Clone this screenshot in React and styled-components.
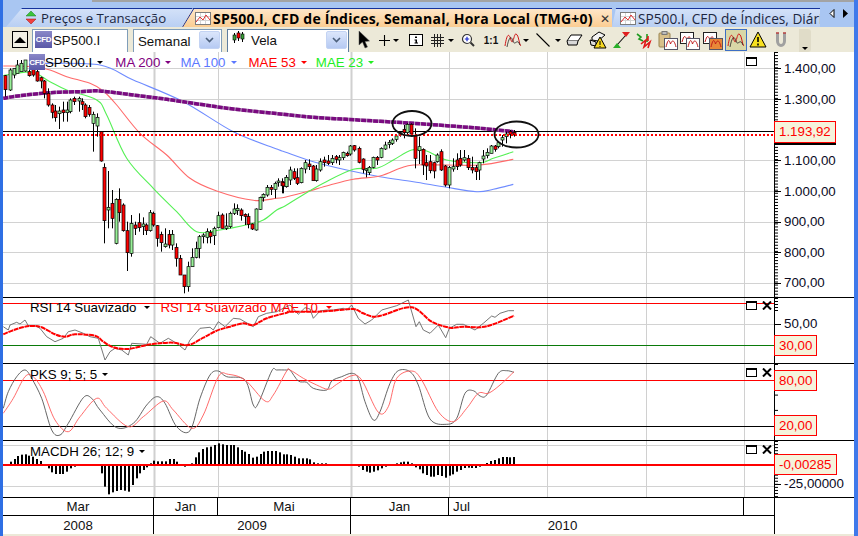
import React from "react";
import styled, { createGlobalStyle } from "styled-components";

const GlobalStyle = createGlobalStyle`
  * { box-sizing: border-box; }
  html, body { margin: 0; background: #fff; overflow: hidden; }
  body { font-family: "Liberation Sans", Arial, sans-serif; color: #000; }
`;

const VERTICALS = [
  { x: 154, w: 2 }, { x: 218, w: 1 }, { x: 351, w: 2 }, { x: 449, w: 1 },
  { x: 547, w: 1 }, { x: 646, w: 1 }, { x: 744, w: 1 },
];

// candles read off the picture: x, wick top, wick bottom, body top, body bottom, colour
const toA = (r) => ({ x: r[0] / 3, wt: 55 + r[1] / 3, wb: 55 + r[2] / 3, bt: 55 + r[3] / 3, bb: 55 + r[4] / 3, c: r[5] });
const toB = (r) => ({ x: 280 + r[0] / 3, wt: 90 + r[1] / 3, wb: 90 + r[2] / 3, bt: 90 + r[3] / 3, bb: 90 + r[4] / 3, c: r[5] });

const CANDLES = [
  ...[
    [15,60,125,62,104,"r"],[30,40,108,45,105,"g"],[41,40,70,40,60,"g"],[52,15,55,30,55,"g"],[64,15,50,25,50,"g"],
    [76,15,50,15,48,"g"],[88,35,65,50,62,"r"],[100,30,65,35,60,"r"],[110,45,80,50,78,"r"],[122,65,100,68,78,"r"],
    [133,75,130,78,115,"r"],[145,100,155,115,150,"r"],[155,145,190,150,172,"r"],[166,150,200,168,188,"r"],
    [178,155,222,168,176,"g"],[190,140,200,165,173,"r"],[200,140,200,165,173,"g"],[211,130,175,135,170,"g"],
    [222,125,150,130,140,"r"],[236,125,170,130,138,"g"],[246,130,165,140,148,"r"],[256,145,190,150,185,"r"],
    [268,150,185,157,178,"r"],[280,170,290,178,205,"g"],[291,175,245,187,213,"g"],[303,228,320,230,318,"r"],
    [313,325,565,337,497,"r"],[325,348,520,457,465,"g"],[337,405,520,445,490,"r"],[348,430,568,433,565,"g"],
    [358,400,500,433,473,"r"],[370,445,530,450,527,"r"],[382,500,648,527,593,"r"],[394,480,605,505,595,"g"],
    [406,500,540,510,520,"r"],[416,475,530,503,518,"r"],[428,487,540,507,515,"g"],[439,505,540,510,527,"r"],
    [451,465,530,473,527,"g"],[460,470,515,475,510,"r"],[472,510,575,512,550,"r"],[484,530,590,538,563,"r"],
    [496,520,578,567,575,"g"],[508,525,580,538,570,"r"],[517,525,585,538,570,"g"],[528,565,635,577,610,"r"],
    [541,600,660,610,660,"r"],[553,660,715,660,695,"r"],[565,620,710,635,695,"g"],[575,580,635,607,635,"g"],
    [587,560,610,580,607,"g"],[598,540,610,545,580,"g"],[609,535,565,540,545,"g"],[620,520,565,530,547,"g"],
    [631,525,565,532,545,"r"],[643,515,570,520,542,"g"],[655,470,520,482,518,"g"],[667,475,520,480,520,"r"],
    [677,475,525,513,520,"g"],[689,470,520,475,515,"g"],[701,445,480,462,475,"g"],[712,448,480,460,467,"g"],
    [722,460,497,465,482,"r"],[734,475,510,478,484,"r"],[745,475,520,484,508,"r"],[757,505,525,507,522,"r"],
    [769,460,527,462,525,"g"],[780,425,465,427,463,"g"],[790,415,440,418,428,"g"],[802,390,425,397,420,"g"],
    [814,390,420,397,403,"r"],[826,380,430,385,403,"g"],[835,370,395,378,382,"g"],[847,370,415,380,392,"r"],
    [859,360,398,367,395,"g"],
  ].map(toA),
  ...[
    [8,275,310,278,288,"r"],[19,260,290,262,290,"g"],[31,230,285,240,270,"g"],[41,235,270,245,265,"r"],
    [52,235,285,263,280,"r"],[64,232,280,235,278,"g"],[76,210,250,218,237,"g"],[88,208,240,222,230,"r"],
    [98,225,272,228,272,"r"],[109,225,275,237,272,"g"],[121,205,245,215,240,"g"],[133,200,230,210,218,"r"],
    [145,195,225,213,220,"r"],[155,195,225,205,218,"g"],[167,195,220,200,208,"r"],[178,195,225,203,210,"g"],
    [190,185,210,187,203,"g"],[200,185,200,190,197,"r"],[211,165,197,168,192,"g"],[223,165,185,167,180,"r"],
    [236,170,220,175,217,"r"],[248,205,250,207,238,"r"],[257,235,262,237,240,"g"],[268,228,255,232,248,"g"],
    [280,200,235,202,232,"g"],[292,198,225,202,210,"r"],[302,172,205,175,202,"g"],[314,155,180,165,177,"g"],
    [326,150,175,157,163,"g"],[337,145,165,150,160,"g"],[349,135,155,138,148,"g"],[360,125,140,128,135,"g"],
    [371,105,145,118,128,"r"],[382,100,135,103,128,"g"],[394,100,140,103,132,"r"],[406,115,235,138,205,"r"],
    [417,140,222,170,182,"g"],[428,175,255,178,225,"r"],[439,195,270,218,228,"r"],[451,195,250,215,242,"r"],
    [461,215,265,218,243,"r"],[472,190,218,195,215,"g"],[484,178,243,185,240,"r"],[496,225,290,228,285,"r"],
    [508,228,295,232,285,"g"],[519,205,245,230,237,"g"],[530,190,240,210,230,"r"],[541,180,230,205,225,"r"],
    [553,180,215,203,210,"g"],[564,195,240,205,233,"r"],[575,200,250,232,240,"r"],[587,225,270,233,245,"r"],
    [598,215,270,218,240,"g"],[610,180,220,198,207,"g"],[620,175,205,187,197,"g"],[632,165,190,168,190,"g"],
    [644,165,185,168,178,"r"],[655,155,175,158,170,"g"],[667,135,170,143,150,"g"],[678,125,160,132,140,"g"],
    [689,120,145,125,133,"r"],[701,120,140,127,135,"r"],
  ].map(toB),
];

// helpers turning crops back into page coordinates
const pts = (...parts) => parts.flatMap(([ox, oy, list]) => list.map(([x, y]) => [ox + x / 3, oy + y / 3]));
const poly = (points) => points.map(([x, y]) => `${x.toFixed(1)},${y.toFixed(1)}`).join(" ");

// catmull-rom through the points, these lines are moving averages and curve softly
const smooth = (p) => {
  let d = `M${p[0][0].toFixed(1)} ${p[0][1].toFixed(1)}`;
  for (let i = 0; i < p.length - 1; i++) {
    const a = p[i - 1] || p[i];
    const b = p[i];
    const c = p[i + 1];
    const e = p[i + 2] || c;
    const c1 = [b[0] + (c[0] - a[0]) / 6, b[1] + (c[1] - a[1]) / 6];
    const c2 = [c[0] - (e[0] - b[0]) / 6, c[1] - (e[1] - b[1]) / 6];
    d += `C${c1[0].toFixed(1)} ${c1[1].toFixed(1)} ${c2[0].toFixed(1)} ${c2[1].toFixed(1)} ${c[0].toFixed(1)} ${c[1].toFixed(1)}`;
  }
  return d;
};

const MA200 = smooth(pts([0, 55, [[10,130],[60,122],[150,113],[240,110],[300,108],[400,120],[500,133],[600,148],[700,162],[870,180]]],
  [280, 90, [[100,82],[200,88],[300,94],[400,100],[500,107],[600,115],[700,125]]]));
const MA100 = smooth(pts([0, 55, [[130,25],[300,30],[400,75],[550,140],[700,230],[830,282]]],
  [280, 90, [[15,186],[100,215],[200,240],[300,260],[400,275],[500,292],[590,305],[640,298],[700,283]]]));
const MAE53 = smooth(pts([0, 55, [[10,33],[100,35],[150,45],[200,65],[270,85],[310,108],[350,150],[420,235],[500,300],[570,370],[650,408],[760,436],[830,430]]],
  [280, 90, [[15,322],[80,305],[150,285],[220,268],[300,258],[360,235],[400,225],[500,225],[600,225],[700,208]]]));
const MAE23 = smooth(pts([0, 55, [[10,62],[50,55],[100,52],[150,80],[200,105],[290,135],[320,180],[380,310],[460,400],[530,470],[590,530],[660,525],[750,507],[790,495],[830,465]]],
  [280, 90, [[15,348],[60,320],[130,280],[220,238],[290,235],[340,210],[395,180],[440,183],[500,210],[600,218],[640,205],[700,185]]]));

const RSI_GRAY = poly(pts([0, 295, [[10,95],[25,105],[30,90],[50,82],[60,87],[75,75],[85,92],[105,92],[120,100],[140,125],[165,140],[190,130],[205,110],[225,105],[250,115],[270,125],[295,130],[315,195],[330,170],[345,160],[365,165],[385,180],[395,145],[440,148],[452,125],[480,145],[505,130],[530,145],[555,165],[570,135],[600,100],[630,97],[640,105],[655,80],[675,95],[700,70],[720,72],[760,95],[775,65],[800,55],[830,50],[850,40]]],
  [290, 295, [[0,30],[25,58],[45,38],[60,42],[70,70],[90,48],[110,45],[130,45],[160,40],[170,45],[185,30],[205,70],[225,87],[245,75],[275,45],[320,32],[335,25],[355,15],[378,95],[388,80],[400,105],[420,115],[445,90],[467,128],[478,100],[500,88],[520,88],[555,105],[580,85],[605,63],[615,67],[630,55],[655,47],[672,47]]]));
const RSI_RED = smooth(pts([0, 295, [[10,118],[50,102],[90,93],[125,97],[165,118],[195,125],[225,118],[285,122],[310,140],[340,157],[385,162],[440,150],[480,145],[520,143],[565,150],[610,128],[650,107],[690,95],[730,85],[760,90],[800,70],[860,53]]],
  [290, 295, [[0,50],[80,50],[130,47],[190,42],[220,55],[250,65],[280,60],[365,37],[425,80],[480,98],[520,95],[570,97],[610,88],[672,62]]]));
const PKS_GRAY = smooth(pts([0, 295, [[10,340],[25,290],[50,245],[75,225],[95,250],[125,310],[155,405],[180,420],[205,385],[250,308],[275,310],[300,345],[350,398],[400,385],[440,330],[470,305],[495,325],[530,395],[570,407],[600,310],[630,240],[655,228],[680,245],[735,255],[760,330],[775,325],[815,228],[830,225],[860,225]]],
  [290, 295, [[0,225],[25,258],[50,262],[70,280],[110,285],[125,258],[155,245],[185,235],[205,250],[225,320],[250,375],[270,350],[300,265],[325,227],[360,230],[385,270],[420,372],[470,388],[500,370],[525,295],[550,287],[570,303],[590,300],[625,235],[650,227],[672,232]]]));
const PKS_RED = smooth(pts([0, 295, [[10,355],[40,310],[75,245],[100,245],[130,290],[165,375],[205,410],[240,365],[290,310],[320,340],[385,395],[430,365],[490,318],[520,345],[575,400],[610,360],[655,245],[685,238],[735,255],[795,318],[820,300],[860,228]]],
  [290, 295, [[0,225],[40,250],[80,270],[115,283],[140,268],[185,242],[215,255],[265,352],[295,335],[320,250],[365,228],[395,255],[445,350],[490,380],[530,340],[565,295],[595,295],[630,270],[672,230]]]));

const HIST = [
  ...[[33,80],[44,72],[55,63],[66,59],[77,58],[88,62],[99,65],[110,72],[122,78],[146,100],[157,112],[168,117],[179,117],[190,117],[200,110],[212,100],[224,95],[293,93],[305,115],[316,155],[328,178],[340,172],[352,168],[363,165],[375,167],[386,170],[398,150],[410,130],[420,115],[432,105],[442,97],[452,85],[463,77],[475,79],[487,79],[498,79],[510,72],[521,72],[532,80],[555,95],[575,85],[587,67],[598,52],[610,42],[621,37],[632,35],[645,30],[656,25],[668,28],[680,30],[692,30],[703,30],[714,37],[725,45],[736,50],[747,57],[759,68],[770,65],[782,57],[793,50],[805,48],[816,48],[828,48],[839,52],[851,58],[862,58],[874,60],[885,65],[897,70],[908,70],[920,70],[931,73],[942,82],[954,85],[965,85],[977,85],[1077,95],[1088,105],[1100,110],[1111,113],[1123,110],[1134,106],[1146,100],[1157,95],[1190,85],[1202,82],[1213,80],[1225,80],[1236,85],[1248,97],[1259,103]]
    .map(([x, y]) => ({ x: x / 3, y: 435 + y / 3 })),
  ...[[8,100],[20,105],[32,110],[42,110],[54,105],[66,108],[78,113],[90,107],[100,103],[112,95],[123,90],[134,84],[146,83],[157,84],[168,84],[180,80],[201,69],[213,63],[225,60],[237,55],[248,51],[260,51],[271,52],[283,51]]
    .map(([x, y]) => ({ x: 420 + x / 3, y: 440 + y / 3 })),
];

const Window = styled.div`
  width: 858px;
  height: 536px;
  display: flex;
  flex-direction: column;
  background: #fff;
  border-left: 3px solid #2f6fe4;
  border-right: 4px solid #3f79ea;
  overflow: hidden;
`;

const TabBar = styled.div`
  position: relative;
  height: 27px;
  flex: none;
  display: flex;
  padding: 8px 0 0 3px;
  background: #a9c6f2;
  &::before {
    content: "";
    position: absolute;
    top: 0;
    left: 89px;
    right: 0;
    height: 2px;
    background: #a3a3a3;
  }
`;

const Tab = styled.div`
  position: relative;
  flex: none;
  height: 19px;
  width: ${(p) => p.$w}px;
  margin-left: ${(p) => p.$ml || 0}px;
  z-index: ${(p) => (p.$active ? 2 : 1)};
  display: flex;
  align-items: center;
  gap: ${(p) => (p.$gap ? p.$gap : 2)}px;
  padding-left: ${(p) => p.$pl}px;
  border-top: 1px solid #16329c;
  background: ${(p) => (p.$active ? "linear-gradient(#ffe6c8, #fbcd92)" : "linear-gradient(#d3e1f8, #b9cff3)")};
  clip-path: polygon(${(p) => p.$slant}px 0, 100% 0, 100% 100%, 0 100%);
  font-family: "Open Sans", Tahoma, sans-serif;
  font-size: ${(p) => p.$size}px;
  letter-spacing: ${(p) => (p.$active ? "0.23px" : "0")};
  font-weight: ${(p) => (p.$active ? 700 : 400)};
  color: ${(p) => (p.$active ? "#000" : "#1c2740")};
  white-space: nowrap;
  overflow: hidden;
  svg { flex: none; }
`;

const TabEdge = styled.svg`
  position: absolute;
  left: 0;
  top: -1px;
`;

const TabClose = styled.span`
  margin-left: 5px;
  font-size: 12px;
  font-weight: 400;
  color: #333;
`;

const TabArrows = styled.div`
  position: absolute;
  top: 9px;
  right: 6px;
  display: flex;
  gap: 7px;
`;

const Toolbar = styled.div`
  height: 25px;
  flex: none;
  display: flex;
  align-items: flex-start;
  padding: 2px 0 0 9px;
  background: #ece9d8;
  overflow: hidden;
`;

const CollapseBtn = styled.div`
  width: 16px;
  height: 17px;
  margin: 2px 4px 0 0;
  display: flex;
  align-items: center;
  justify-content: center;
  background: #f2f0e4;
  border: 1px solid #000;
`;

const Combo = styled.div`
  width: ${(p) => p.$w}px;
  height: 27px;
  margin-right: 5px;
  display: flex;
  align-items: flex-start;
  gap: 1px;
  padding: 1px 1px 0 ${(p) => p.$pl || 2}px;
  background: #fff;
  border: 1px solid ${(p) => p.$border || "#7f9db9"};
  font-size: 13.3px;
  color: #111;
`;

const ComboLabel = styled.span`
  flex: 1;
  padding-top: ${(p) => p.$pt || 2}px;
  margin-left: ${(p) => p.$ml || 0}px;
`;

const ComboArrow = styled.span`
  width: 21px;
  height: 18px;
  display: flex;
  align-items: center;
  justify-content: center;
  border: 1px solid #c3d3f3;
  border-radius: 2px;
  background: linear-gradient(#dbe6fb, #b6caf3);
`;

const Tool = styled.div`
  flex: none;
  width: ${(p) => p.$w}px;
  height: 22px;
  margin-left: ${(p) => p.$ml || 0}px;
  display: flex;
  align-items: center;
  justify-content: center;
  font-size: 10px;
  font-weight: 700;
  color: #111;
  ${(p) => p.$selected && "background: #d9d7a6; border: 1px solid #3e6fc4;"}
`;

const Grip = styled.div`
  flex: none;
  width: 12px;
  height: 23px;
  margin-left: 8px;
  display: flex;
  align-items: flex-end;
  justify-content: center;
  padding-bottom: 2px;
  background: #e0dcc8;
  border-radius: 0 3px 3px 0;
`;

const Pane = styled.div`
  position: relative;
  flex: none;
  height: ${(p) => p.$h}px;
  display: flex;
  border-bottom: 1px solid #000;
  background: #fff;
`;

const Plot = styled.svg`
  flex: none;
  display: block;
  width: 771px;
  height: 100%;
`;

const Axis = styled.div`
  position: relative;
  flex: 1;
  border-left: 1px solid #000;
  font-size: 13.3px;
`;

const AxisTicks = styled.svg`
  position: absolute;
  left: 0;
  top: 0;
  width: 8px;
  height: 100%;
`;

const AxisLabel = styled.span`
  position: absolute;
  left: 9px;
  top: ${(p) => p.$y}px;
  color: #0a0a1e;
  line-height: 16px;
`;

const PriceTag = styled.span`
  position: absolute;
  left: -1px;
  top: ${(p) => p.$y}px;
  width: ${(p) => p.$w}px;
  height: ${(p) => p.$h || 21}px;
  display: flex;
  align-items: center;
  padding: 0 0 1px 4px;
  background: #f5f3dc;
  border: 1px solid #f00;
  color: #f00;
  z-index: 2;
  ${(p) => p.$shadow && "box-shadow: 0 2px 0 #000;"}
`;

const Legend = styled.div`
  position: absolute;
  left: ${(p) => p.$left}px;
  top: ${(p) => p.$top}px;
  display: flex;
  align-items: center;
  font-size: 13.3px;
  line-height: 15px;
  white-space: nowrap;
`;

const LegendItem = styled.span`
  display: inline-flex;
  align-items: center;
  gap: ${(p) => p.$gap || 5}px;
  color: ${(p) => p.$color || "#000"};
  margin-right: ${(p) => p.$mr || 0}px;
`;

const CfdBadge = styled.span`
  flex: none;
  width: ${(p) => p.$s || 16}px;
  height: ${(p) => p.$s || 16}px;
  display: inline-flex;
  align-items: center;
  justify-content: center;
  background: linear-gradient(#8a88c8, #5a58a8);
  color: #fff;
  font-size: 8px;
  font-weight: 700;
  letter-spacing: -0.3px;
`;

const Caret = styled.span`
  display: inline-block;
  width: 0;
  height: 0;
  border-left: 3.5px solid transparent;
  border-right: 3.5px solid transparent;
  border-top: 3.5px solid ${(p) => p.$color || "#000"};
`;

const PaneControls = styled.div`
  position: absolute;
  left: 743px;
  top: ${(p) => p.$top}px;
  display: flex;
  align-items: center;
  gap: 5px;
  z-index: 2;
`;

const MaxBox = styled.span`
  width: 11px;
  height: 9px;
  background: #fff;
  border: 1px solid #000;
  border-top-width: 2px;
`;

const TimeAxis = styled.div`
  flex: none;
  height: 36px;
  display: flex;
`;

const TimeRows = styled.div`
  flex: none;
  width: 771px;
  display: flex;
  flex-direction: column;
`;

const TimeRow = styled.div`
  height: 18px;
  display: flex;
  border-bottom: ${(p) => (p.$line ? "1px solid #000" : "none")};
  font-size: 13.3px;
`;

const TimeCell = styled.div`
  flex: none;
  width: ${(p) => p.$w}px;
  display: flex;
  align-items: center;
  justify-content: ${(p) => (p.$start ? "flex-start" : "center")};
  padding-left: ${(p) => p.$pl || 0}px;
  border-right: ${(p) => (p.$end ? "none" : "1px solid #000")};
  color: #111;
`;

const StatusEdge = styled.div`
  flex: 1;
  background: #ece9d8;
`;

const Grid = ({ lines = [] }) => (
  <g>
    {lines.map((y) => (
      <line key={y} x1="3" x2="774" y1={y + 0.5} y2={y + 0.5} stroke="#d2d2d2" />
    ))}
    {VERTICALS.map((v) => (
      <line key={v.x} x1={v.x + 0.5} x2={v.x + 0.5} y1="0" y2="540" stroke="#d0d0d0" strokeWidth={v.w} />
    ))}
  </g>
);

const Ticks = ({ h, step, major = [] }) => (
  <AxisTicks>
    {Array.from({ length: Math.floor(h / step) + 1 }, (_, i) => (
      <line key={i} x1="0" x2="3" y1={i * step + 0.5} y2={i * step + 0.5} stroke="#000" />
    ))}
    {major.map((y) => (
      <line key={y} x1="0" x2="6" y1={y + 0.5} y2={y + 0.5} stroke="#000" />
    ))}
  </AxisTicks>
);

const Candle = ({ x, wt, wb, bt, bb, c }) => {
  const cx = Math.round(x) + 0.5;
  return (
    <g>
      <line x1={cx} x2={cx} y1={wt} y2={wb} stroke="#000" />
      <rect x={cx - 1.5} y={bt} width="3" height={Math.max(bb - bt, 1.5)} fill={c === "r" ? "#f00" : "#98f098"} stroke="#000" strokeWidth="0.7" />
    </g>
  );
};

const MainPlot = () => (
  <Plot viewBox="3 52 771 245" preserveAspectRatio="none">
    <Grid lines={[68, 99, 160, 191, 222, 252, 283]} />
    <path d={MA100} fill="none" stroke="#6f8cff" strokeWidth="1.1" />
    <path d={MAE53} fill="none" stroke="#ff6a6a" strokeWidth="1.1" />
    <path d={MAE23} fill="none" stroke="#55f055" strokeWidth="1.1" />
    <line x1="3" x2="774" y1="131.5" y2="131.5" stroke="#000" />
    <path d={MA200} fill="none" stroke="#b9a4bf" strokeWidth="3.5" />
    <path d={MA200} fill="none" stroke="#7a0a80" strokeWidth="3.5" strokeDasharray="5 1" />
    {CANDLES.map((k) => (
      <Candle key={k.x} {...k} />
    ))}
    <line x1="3" x2="774" y1="135" y2="135" stroke="#f00" strokeWidth="2" strokeDasharray="2 2" />
    <ellipse cx="412" cy="123.5" rx="19.5" ry="12.5" fill="none" stroke="#111" strokeWidth="1.8" />
    <ellipse cx="516.5" cy="134.5" rx="22" ry="13" fill="none" stroke="#111" strokeWidth="1.8" />
  </Plot>
);

const RsiPlot = () => (
  <Plot viewBox="3 298 771 65" preserveAspectRatio="none">
    <Grid lines={[324]} />
    <line x1="3" x2="774" y1="303.5" y2="303.5" stroke="#f00" />
    <line x1="3" x2="774" y1="345.5" y2="345.5" stroke="#0a7a0a" />
    <polyline points={RSI_GRAY} fill="none" stroke="#666" strokeWidth="0.9" />
    <path d={RSI_RED} fill="none" stroke="#f00" strokeWidth="2" strokeDasharray="5 0.6" />
  </Plot>
);

const PksPlot = () => (
  <Plot viewBox="3 364 771 76" preserveAspectRatio="none">
    <Grid />
    <line x1="3" x2="774" y1="380.5" y2="380.5" stroke="#f00" />
    <line x1="3" x2="774" y1="426.5" y2="426.5" stroke="#000" />
    <path d={PKS_GRAY} fill="none" stroke="#555" strokeWidth="0.9" />
    <path d={PKS_RED} fill="none" stroke="#ff5a5a" strokeWidth="0.9" />
  </Plot>
);

const MacdPlot = () => (
  <Plot viewBox="3 441 771 56" preserveAspectRatio="none">
    <Grid lines={[445, 486]} />
    {HIST.map((b) => (
      <rect key={b.x} x={Math.round(b.x) - 1} y={Math.min(b.y, 465)} width="2" height={Math.abs(b.y - 465)} fill="#000" />
    ))}
    <line x1="3" x2="774" y1="465" y2="465" stroke="#f00" strokeWidth="2" />
  </Plot>
);

const Close = () => (
  <svg width="10" height="9" viewBox="0 0 10 9">
    <path d="M1 0.5 L9 8.5 M9 0.5 L1 8.5" stroke="#000" strokeWidth="2" fill="none" />
  </svg>
);

const UpDown = () => (
  <svg width="16" height="14" viewBox="0 0 16 14">
    <path d="M8 0 L13 5 H3 Z" fill="#3cc43c" stroke="#1c7c1c" strokeWidth="0.5" />
    <path d="M8 13 L13 8 H3 Z" fill="#f04040" stroke="#a01010" strokeWidth="0.5" />
  </svg>
);

const ChartTabIcon = () => (
  <svg width="16" height="13" viewBox="0 0 16 13">
    <rect x="0.5" y="0.5" width="15" height="12" fill="#fff" stroke="#7c7c7c" />
    <path d="M1 4.5H15M1 8.5H15M5.5 1V12M10.5 1V12" stroke="#d4d4d4" />
    <path d="M1 10 L5 5 L8 8 L11 3 L15 8" stroke="#e03030" fill="none" />
  </svg>
);

const SmallCandles = () => (
  <svg width="13" height="13" viewBox="0 0 13 13">
    <path d="M2.5 2V12M6.5 0V10M10.5 1V11" stroke="#000" />
    <rect x="1" y="4" width="3" height="5" fill="#3aa03a" stroke="#000" strokeWidth="0.6" />
    <rect x="5" y="2" width="3" height="5" fill="#f00" stroke="#000" strokeWidth="0.6" />
    <rect x="9" y="3" width="3" height="5" fill="#3aa03a" stroke="#000" strokeWidth="0.6" />
  </svg>
);

const Chevron = () => (
  <svg width="9" height="6" viewBox="0 0 9 6">
    <path d="M1 1 L4.5 4.5 L8 1" stroke="#4c607c" strokeWidth="1.6" fill="none" />
  </svg>
);

const Icon = ({ children, w = 18, h = 18 }) => (
  <svg width={w} height={h} viewBox={`0 0 ${w} ${h}`}>
    {children}
  </svg>
);

const Wave = () => (
  <>
    <path d="M1 15 C3 2 5 2 7 9 C9 16 10 2 12 3 C15 4 15 14 17 15" stroke="#d01818" fill="none" strokeWidth="1" />
    <path d="M3 16 C5 6 7 4 9 10 C11 16 13 6 16 14" stroke="#222" fill="none" strokeWidth="0.8" />
  </>
);

const ChartCard = ({ fill }) => (
  <>
    <rect x="6.5" y="7.5" width="13" height="11" fill={fill || "#fff"} stroke="#556" />
    <path d="M8 16 C10 8 11 8 12.5 13 C14 9 16 8 18 16" stroke="#c01818" fill="none" />
  </>
);

const tools = [
  { w: 20, icon: <Icon><path d="M4 0 L4 14 L7.5 11 L10 17 L12.5 16 L10 10.5 L14.5 10 Z" fill="#000" stroke="#555" strokeWidth="0.5" /></Icon> },
  { w: 16, ml: 2, icon: <Icon w={13} h={13}><path d="M6.5 1V12M1 6.5H12" stroke="#000" strokeWidth="1.1" /></Icon> },
  { w: 8, caret: true },
  { w: 20, ml: 6, icon: <Icon w={14} h={12}><rect x="0.5" y="0.5" width="13" height="11" fill="#fff" stroke="#000" /><path d="M6 2.5H8V4H6ZM5.5 5.5H8V8.5H9V9.5H5.5V8.5H6.5V6.5H5.5Z" fill="#000" /></Icon> },
  { w: 18, ml: 2, icon: <Icon w={13} h={13}><path d="M0 3.5H13M0 6.5H13M0 9.5H13M3.5 0V13M6.5 0V13M9.5 0V13" stroke="#222" /></Icon> },
  { w: 10, caret: true },
  { w: 18, ml: 3, icon: <Icon w={14} h={14}><circle cx="6" cy="6" r="4.5" fill="#fff" stroke="#333" strokeWidth="1.2" /><path d="M3.8 6H8.2M6 3.8V8.2" stroke="#1a2ad0" strokeWidth="1.2" /><path d="M9.5 9.5L13 13" stroke="#333" strokeWidth="2" /></Icon> },
  { w: 20, ml: 4, label: "1:1" },
  { w: 18, ml: 3, icon: <Icon><Wave /></Icon> },
  { w: 8, caret: true },
  { w: 20, ml: 3, icon: <Icon w={14} h={14}><path d="M0.5 0.5L13.5 13.5" stroke="#000" strokeWidth="1.1" /></Icon> },
  { w: 10, caret: true },
  { w: 20, ml: 1, icon: <Icon w={17} h={12}><path d="M5 1H16L12 7H1Z" fill="#fff" stroke="#000" /><path d="M1 7L2 11H11L12 7" fill="#d8d8d8" stroke="#000" /></Icon> },
  { w: 20, ml: 4, icon: <Icon><path d="M3 6 L10 1 L16 4 L9 10 L3 9Z" fill="#f4f4f4" stroke="#000" /><path d="M1 9L7 11L7 15L2 14Z" fill="#ddd" stroke="#000" /><path d="M11 6L17 17H5Z" fill="#f6d820" stroke="#000" /><path d="M11 10V14M11 15V16" stroke="#000" /></Icon> },
  { w: 20, ml: 3, icon: <Icon><path d="M5 14L14 4" stroke="#111" strokeWidth="1.1" /><path d="M10 1H18L14 6Z" fill="#e02020" /><path d="M1 17H9L5 12Z" fill="#28b028" /></Icon> },
  { w: 20, ml: 3, icon: <Icon><path d="M2 3L6 6L4 8L8 10M12 3V11" stroke="#1f9a1f" strokeWidth="1.6" fill="none" /><path d="M6 13L11 9L9 16L15 11L13 17M13 5V10" stroke="#e01818" strokeWidth="1.6" fill="none" /></Icon> },
  { w: 20, ml: 4, icon: <Icon w={20} h={19}><rect x="1" y="2" width="11" height="14" rx="1" fill="#d8c08a" stroke="#9a8450" /><rect x="4" y="0.5" width="5" height="3" fill="#bcbcbc" stroke="#777" /><ChartCard /></Icon> },
  { w: 22, ml: 1, icon: <Icon w={20} h={19}><rect x="0.5" y="1.5" width="13" height="11" fill="#fff" stroke="#222" /><path d="M2 11 C4 4 5 4 7 9 C8 5 10 4 12 11" stroke="#c01818" fill="none" /><ChartCard /></Icon> },
  { w: 22, ml: 1, icon: <Icon w={20} h={19}><rect x="0.5" y="1.5" width="13" height="11" fill="#fff" stroke="#222" /><path d="M2 11 C4 4 5 4 7 9 C8 5 10 4 12 11" stroke="#c01818" fill="none" /><ChartCard fill="#e88838" /></Icon> },
  { w: 22, ml: 1, selected: true, icon: <Icon><Wave /></Icon> },
  { w: 20, ml: 1, icon: <Icon><path d="M9 1L17 16H1Z" fill="#f8e020" stroke="#000" /><path d="M9 6V11M9 12.5V14.5" stroke="#000" strokeWidth="1.6" /></Icon> },
  { w: 20, ml: 3, icon: <Icon w={14} h={16}><path d="M3.5 1V9C3.5 15 10.5 15 10.5 9V1" stroke="#a0a0a0" strokeWidth="3" fill="none" /><path d="M2 1H5M9 1H12" stroke="#b84040" strokeWidth="1.6" /></Icon> },
];

const App = () => (
  <>
    <GlobalStyle />
    <Window>
      <TabBar>
        <Tab $w={186} $pl={17} $gap={2} $slant={16} $size={13.2}>
          <UpDown />
          Preços e Transacção
        </Tab>
        <Tab $active $w={430} $ml={-10} $pl={13} $slant={11} $size={14}>
          <TabEdge width="14" height="20"><path d="M0.5 19 L11.5 1" stroke="#16329c" fill="none" /></TabEdge>
          <ChartTabIcon />
          SP500.I, CFD de Índices, Semanal, Hora Local (TMG+0)
          <TabClose>✕</TabClose>
        </Tab>
        <Tab $w={208} $pl={8} $slant={4} $size={13.7}>
          <ChartTabIcon />
          SP500.I, CFD de Índices, Diário
        </Tab>
        <TabArrows>
          <svg width="6" height="9"><path d="M5 0.5V8.5L1 4.5Z" fill="#fff" stroke="#000" /></svg>
          <svg width="6" height="9"><path d="M1 0L6 4.5L1 9Z" fill="#000" /></svg>
        </TabArrows>
      </TabBar>

      <Toolbar>
        <CollapseBtn>
          <svg width="12" height="6"><path d="M6 0L12 6H0Z" fill="#000" /></svg>
        </CollapseBtn>
        <Combo $w={96}>
          <CfdBadge $s={17}>CFD</CfdBadge>
          <ComboLabel>SP500.I</ComboLabel>
        </Combo>
        <Combo $w={89} $pl={4}>
          <ComboLabel $pt={3}>Semanal</ComboLabel>
          <ComboArrow><Chevron /></ComboArrow>
        </Combo>
        <Combo $w={122} $pl={4} $border="#5d7da0">
          <SmallCandles />
          <ComboLabel $ml={5}>Vela</ComboLabel>
          <ComboArrow><Chevron /></ComboArrow>
        </Combo>
        {tools.map((t, i) => (
          <Tool key={i} $w={t.w} $ml={t.ml} $selected={t.selected}>
            {t.caret ? <Caret /> : t.label || t.icon}
          </Tool>
        ))}
        <Grip><Caret /></Grip>
      </Toolbar>

      <Pane $h={246}>
        <MainPlot />
        <Legend $left={26} $top={2}>
          <CfdBadge>CFD</CfdBadge>
          <LegendItem $mr={12}>SP500.I <Caret /></LegendItem>
          <LegendItem $color="#800080" $mr={9}>MA 200 <Caret $color="#800080" /></LegendItem>
          <LegendItem $color="#5c78ff" $mr={12}>MA 100 <Caret $color="#5c78ff" /></LegendItem>
          <LegendItem $color="#f00" $mr={9}>MAE 53 <Caret $color="#f00" /></LegendItem>
          <LegendItem $color="#22ee22">MAE 23 <Caret $color="#22ee22" /></LegendItem>
        </Legend>
        <PaneControls $top={5}><MaxBox /></PaneControls>
        <Axis>
          <Ticks h={245} step={3.06} major={[16, 47, 108, 139, 170, 200, 231]} />
          <AxisLabel $y={9}>1.400,00</AxisLabel>
          <AxisLabel $y={40}>1.300,00</AxisLabel>
          <PriceTag $y={69} $w={62} $h={22} $shadow>1.193,92</PriceTag>
          <AxisLabel $y={101}>1.100,00</AxisLabel>
          <AxisLabel $y={132}>1.000,00</AxisLabel>
          <AxisLabel $y={162}>900,00</AxisLabel>
          <AxisLabel $y={193}>800,00</AxisLabel>
          <AxisLabel $y={223}>700,00</AxisLabel>
        </Axis>
      </Pane>

      <Pane $h={66}>
        <RsiPlot />
        <Legend $left={27} $top={2}>
          <LegendItem $gap={8} $mr={10}>RSI 14 Suavizado <Caret /></LegendItem>
          <LegendItem $color="#f00" $gap={8}>RSI 14 Suavizado MAE 10 <Caret $color="#f00" /></LegendItem>
        </Legend>
        <PaneControls $top={3}><MaxBox /><Close /></PaneControls>
        <Axis>
          <Ticks h={12} step={3} major={[26]} />
          <AxisLabel $y={18}>50,00</AxisLabel>
          <PriceTag $y={37} $w={43}>30,00</PriceTag>
        </Axis>
      </Pane>

      <Pane $h={77}>
        <PksPlot />
        <Legend $left={27} $top={3}>
          <LegendItem>PKS 9; 5; 5 <Caret /></LegendItem>
        </Legend>
        <PaneControls $top={4}><MaxBox /><Close /></PaneControls>
        <Axis>
          <Ticks h={76} step={15.3} />
          <PriceTag $y={6} $w={43}>80,00</PriceTag>
          <PriceTag $y={51} $w={43}>20,00</PriceTag>
        </Axis>
      </Pane>

      <Pane $h={57}>
        <MacdPlot />
        <Legend $left={27} $top={3}>
          <LegendItem>MACDH 26; 12; 9 <Caret /></LegendItem>
        </Legend>
        <PaneControls $top={4}><MaxBox /><Close /></PaneControls>
        <Axis>
          <Ticks h={56} step={3.06} major={[43]} />
          <PriceTag $y={13} $w={63}>-0,00285</PriceTag>
          <AxisLabel $y={35}>-25,00000</AxisLabel>
        </Axis>
      </Pane>

      <TimeAxis>
        <TimeRows>
          <TimeRow $line>
            <TimeCell $w={151}>Mar</TimeCell>
            <TimeCell $w={64}>Jan</TimeCell>
            <TimeCell $w={133}>Mai</TimeCell>
            <TimeCell $w={98}>Jan</TimeCell>
            <TimeCell $w={295} $start $pl={4}>Jul</TimeCell>
            <TimeCell $w={30} $end />
          </TimeRow>
          <TimeRow>
            <TimeCell $w={151}>2008</TimeCell>
            <TimeCell $w={197}>2009</TimeCell>
            <TimeCell $w={423} $end>2010</TimeCell>
          </TimeRow>
        </TimeRows>
        <Axis />
      </TimeAxis>
      <StatusEdge />
    </Window>
  </>
);

export default App;
